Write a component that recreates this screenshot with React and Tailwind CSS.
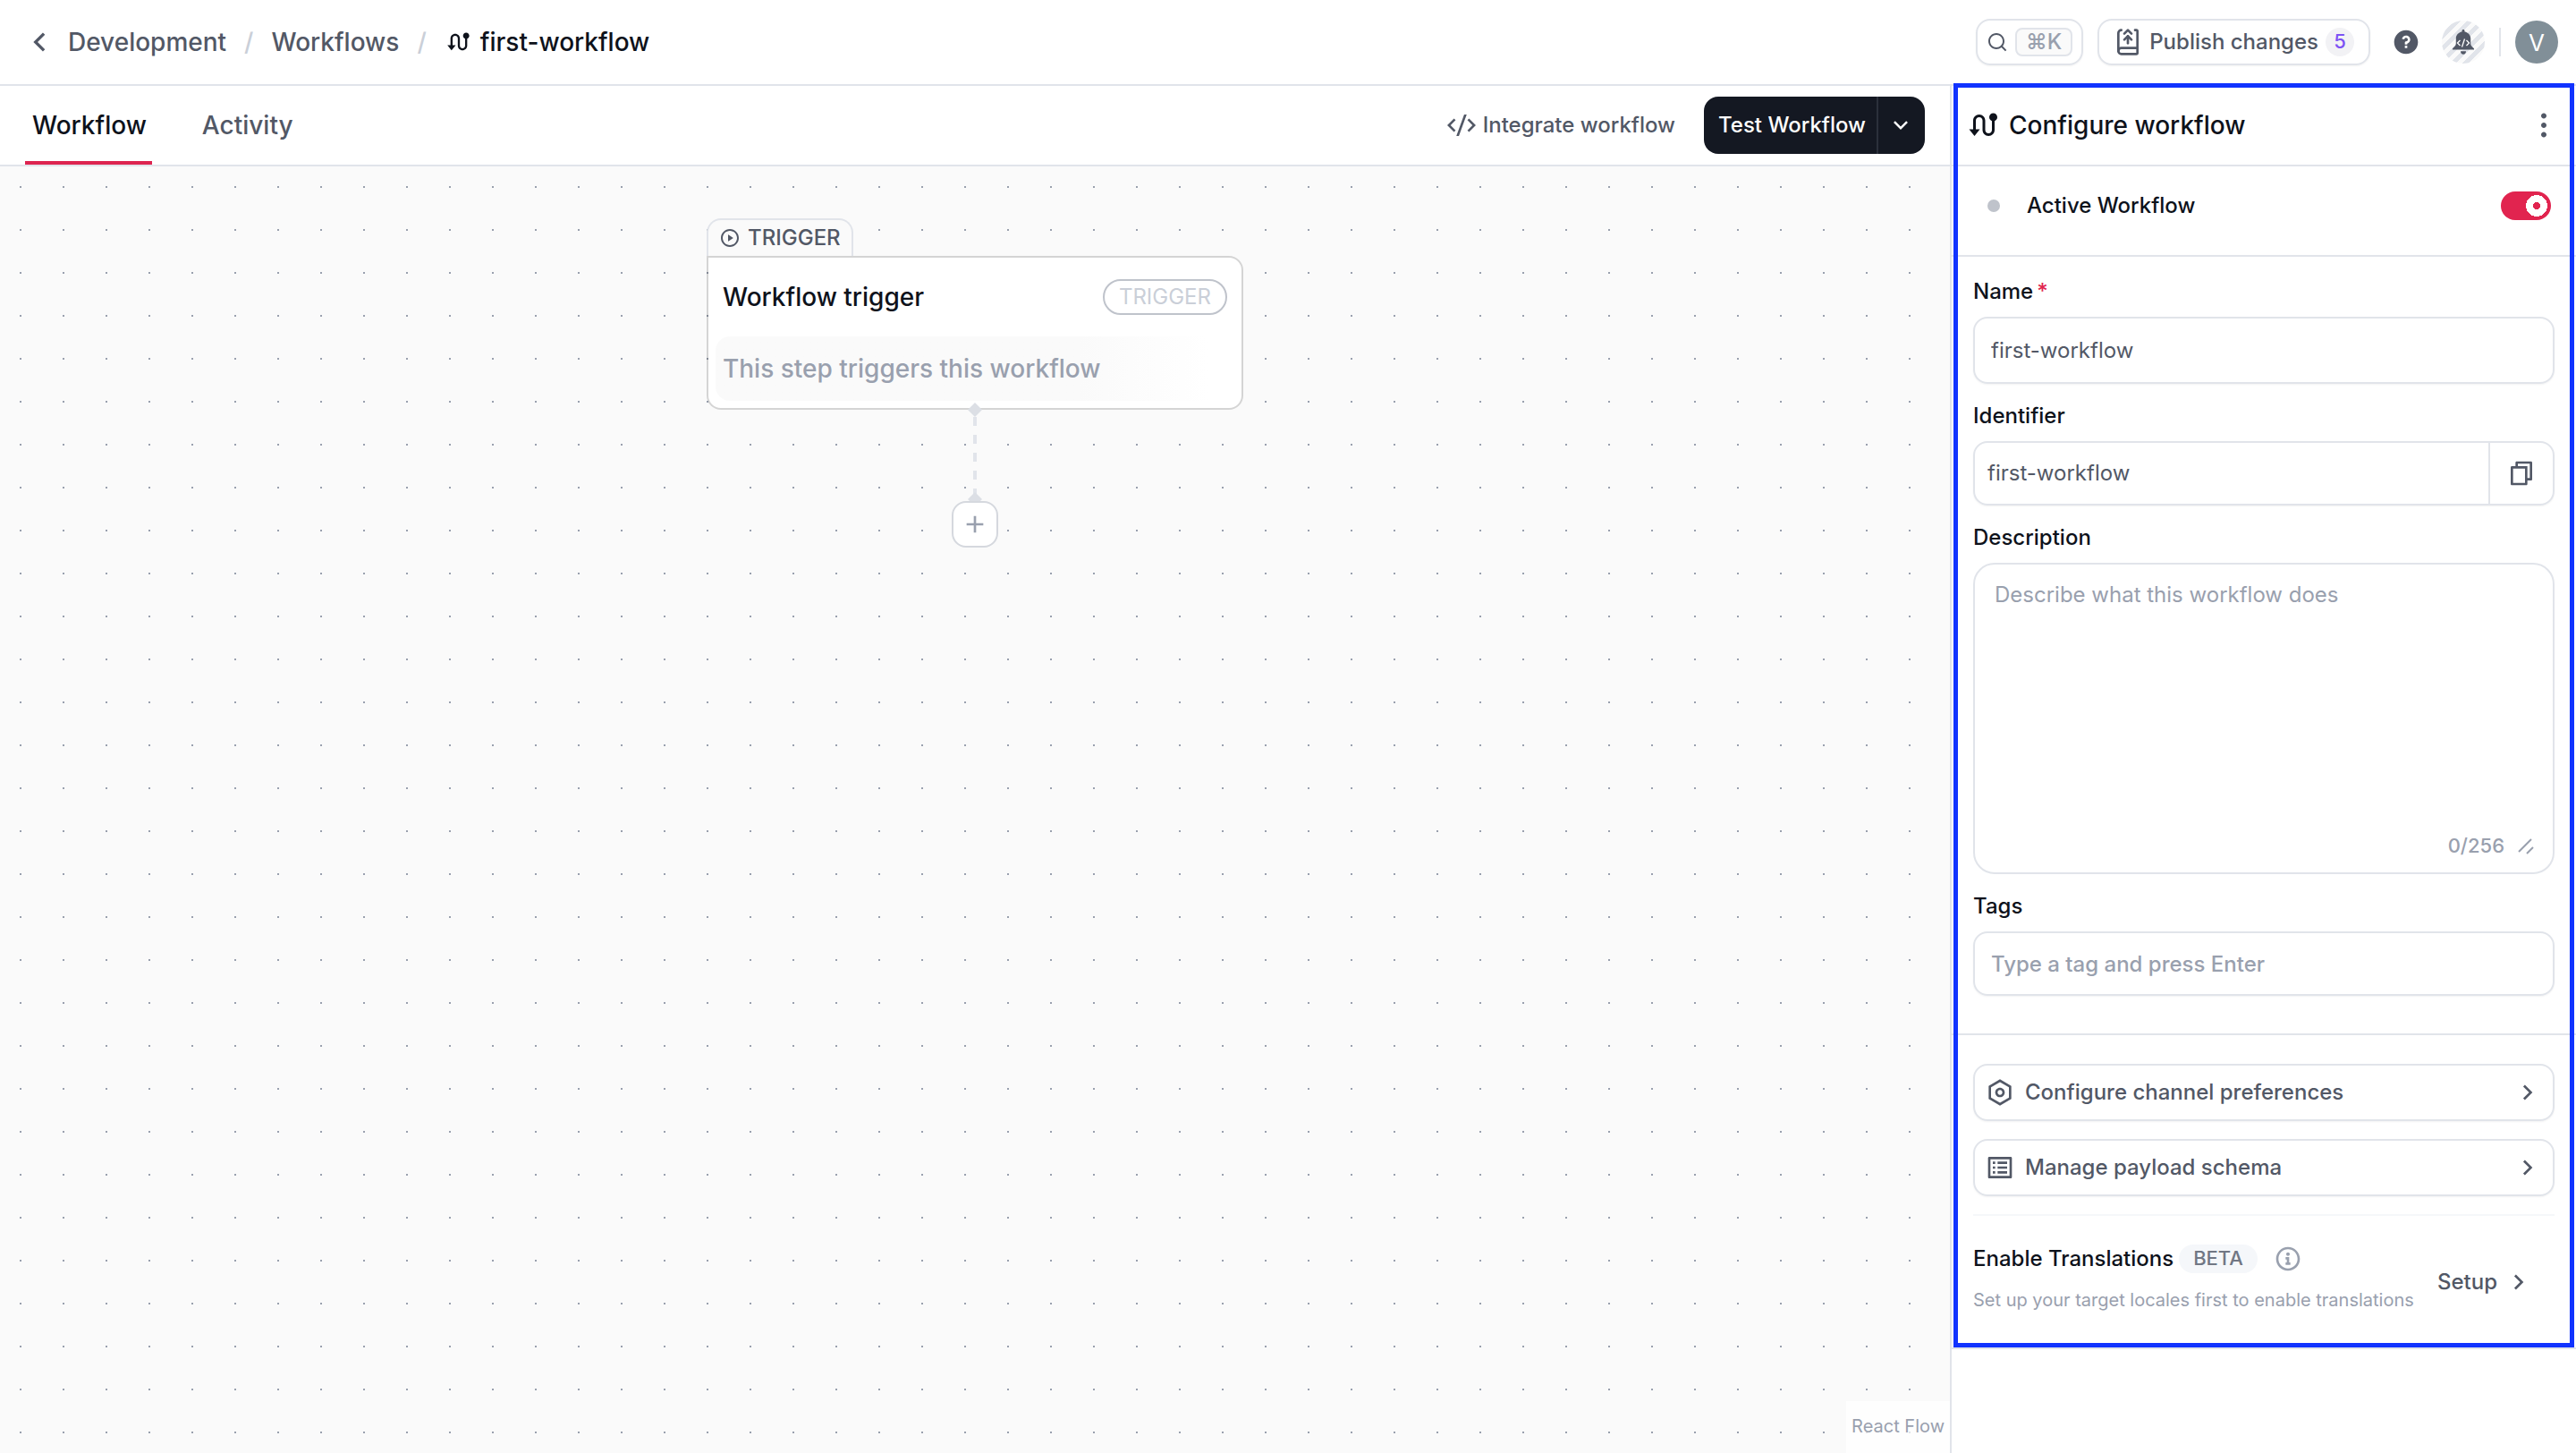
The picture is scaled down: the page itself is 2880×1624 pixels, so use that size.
import React, { useState } from "react";
import {
	RiAddLine,
	RiArrowDownSLine,
	RiArrowLeftSLine,
	RiArrowRightSLine,
	RiCodeSSlashLine,
	RiFileCopyLine,
	RiInformation2Line,
	RiListView,
	RiMore2Fill,
	RiPlayCircleLine,
	RiQuestionFill,
	RiRouteFill,
	RiSearchLine,
	RiSettingsLine,
} from "react-icons/ri";
import { LuBookUp2 } from "react-icons/lu";

const BellIcon = () => (
	<svg viewBox="0 0 24 28" className="h-7 w-6" fill="none">
		<path
			d="M12 0c.9 0 1.500.6 1.500 1.500v.9c3.900.7 6.700 3.700 6.700 7.600v5.500c0 2.200 1 3.300 3.800 5.700v1.300H0v-1.300c2.800-2.400 3.800-3.500 3.800-5.700V10c0-3.900 2.800-6.900 6.700-7.600v-.9C10.500.6 11.100 0 12 0z"
			fill="#525866"
		/>
		<path d="M9 24.300h6c0 2-1.200 3.500-3 3.500s-3-1.500-3-3.500z" fill="#525866" />
		<path
			d="M8.500 12 5.500 15l3 3M15.500 12l3 3-3 3M13.500 10.500l-3 9"
			stroke="#fff"
			strokeWidth="1.300"
		/>
	</svg>
);

const Header = () => (
	<header className="flex h-24 items-center justify-between border-b-2 border-[#e1e4ea] pr-5 pl-6">
		<nav className="flex items-center text-[28px] leading-10 font-medium text-[#525866]">
			<button aria-label="Back" className="mr-3">
				<RiArrowLeftSLine size={40} />
			</button>
			<a href="#development">Development</a>
			<span className="mx-5 text-[#cacfd8]">/</span>
			<a href="#workflows">Workflows</a>
			<span className="mr-[22px] ml-5 text-[#cacfd8]">/</span>
			<span className="flex items-center gap-2.5 text-[#0e121b]">
				<RiRouteFill size={28} />
				first-workflow
			</span>
		</nav>
		<div className="flex items-center">
			<button
				aria-label="Search"
				className="flex h-[52px] items-center gap-2 rounded-2xl border-2 border-[#e1e4ea] px-2.5 shadow-xs"
			>
				<RiSearchLine size={24} className="text-[#525866]" />
				<kbd className="flex h-8 w-16 items-center justify-center rounded-lg border-2 border-[#e1e4ea] bg-[#fafafa] font-[Inter,sans-serif] text-2xl font-medium text-[#99a0ae]">
					⌘K
				</kbd>
			</button>
			<button className="ml-4 flex h-[52px] items-center gap-2 rounded-2xl border-2 border-[#e1e4ea] px-4 text-2xl font-medium text-[#525866] shadow-xs">
				<LuBookUp2 size={32} />
				Publish changes
				<span className="flex size-8 items-center justify-center rounded-full bg-[#f2f2f5] text-[22px] text-[#7d52f4]">
					5
				</span>
			</button>
			<button aria-label="Help" className="ml-6 text-[#525866]">
				<RiQuestionFill size={32} />
			</button>
			<button
				aria-label="Notifications"
				className="ml-6 flex size-12 items-center justify-center rounded-full bg-[repeating-linear-gradient(135deg,#e1e4ea_0px,#e1e4ea_5px,#fafafa_5px,#fafafa_10px)]"
			>
				<BellIcon />
			</button>
			<div className="mx-4 h-8 w-0.5 bg-[#e1e4ea]" />
			<button className="flex size-12 items-center justify-center rounded-full bg-[#818f98] text-[26px] text-white">
				V
			</button>
		</div>
	</header>
);

const Tabs = () => (
	<div className="flex h-[90px] items-center justify-between border-b-2 border-[#e1e4ea] pr-7 pl-7">
		<div className="flex h-full gap-12 text-[28px] font-medium" role="tablist">
			<button
				role="tab"
				aria-selected="true"
				className="h-full border-b-4 border-[#dd2450] pr-1.5 pl-2 pt-1 text-[#0e121b]"
			>
				Workflow
			</button>
			<button
				role="tab"
				aria-selected="false"
				className="h-full border-b-4 border-transparent pr-1.5 pl-2 pt-1 text-[#525866]"
			>
				Activity
			</button>
		</div>
		<div className="flex items-center gap-8 text-2xl font-medium">
			<button className="flex items-center gap-2 text-[#525866]">
				<RiCodeSSlashLine size={32} />
				Integrate workflow
			</button>
			<div className="flex h-16 rounded-2xl bg-[#141822] text-white">
				<button className="border-r-2 border-[#2b303b] pr-3 pl-4">
					Test Workflow
				</button>
				<button aria-label="More test options" className="pr-3 pl-2.5">
					<RiArrowDownSLine size={30} />
				</button>
			</div>
		</div>
	</div>
);

const Canvas = () => (
	<div className="relative flex-1 bg-[#fafafa]">
		<svg className="absolute inset-0 size-full">
			<defs>
				<pattern id="dots" width="48" height="48" patternUnits="userSpaceOnUse">
					<rect x="22" y="22" width="2" height="2" fill="#99a0ae" />
				</pattern>
			</defs>
			<rect width="100%" height="100%" fill="url(#dots)" />
		</svg>

		<div className="absolute top-[58px] left-[790px] w-[600px]">
			<div className="flex h-[42px] w-fit items-center gap-2 rounded-t-2xl border-2 border-b-0 border-[#e1e4ea] bg-[#fafafa] px-3 text-2xl font-medium text-[#525866]">
				<RiPlayCircleLine size={24} />
				TRIGGER
			</div>
			<div className="h-[172px] rounded-2xl rounded-tl-none border-2 border-black/15 bg-white bg-clip-padding px-2">
				<div className="flex h-[88px] items-center justify-between px-2">
					<h3 className="text-[28px] font-medium text-[#0e121b]">
						Workflow trigger
					</h3>
					<span className="flex h-10 items-center rounded-full border-2 border-[#bfc3cb] px-4 text-2xl text-[#cacfd8]">
						TRIGGER
					</span>
				</div>
				<p className="flex h-[72px] items-center rounded-2xl bg-linear-to-r from-[#fafafa] from-70% to-white to-95% px-2 text-[28px] font-medium text-[#99a0ae]">
					This step triggers this workflow
				</p>
			</div>
		</div>

		<svg
			viewBox="0 0 20 114"
			className="absolute top-[262px] left-[1080px] h-[114px] w-5"
		>
			<path
				d="M10 18V104"
				stroke="#e1e4ea"
				strokeWidth="4"
				strokeDasharray="10 10"
			/>
			<path d="M10 2l8 8-8 8-8-8z" fill="#dcdfe5" />
			<path d="M10 102l8 8-8 8-8-8z" fill="#dcdfe5" />
		</svg>
		<button
			aria-label="Add step"
			className="absolute top-[374px] left-[1064px] flex size-[52px] items-center justify-center rounded-2xl border-2 border-[#d5d8de] bg-white text-[#99a0ae]"
		>
			<RiAddLine size={32} />
		</button>

		<a
			href="#react-flow"
			className="absolute right-0 bottom-0 flex h-[58px] items-center bg-white/70 px-1.5 pb-0.5 text-xl text-[#99a0ae]"
		>
			React Flow
		</a>
	</div>
);

const fieldClass =
	"w-full rounded-2xl border-2 border-[#e1e4ea] px-[18px] text-2xl text-[#525866] shadow-xs outline-none placeholder:font-medium placeholder:text-[#99a0ae]";
const labelClass = "block text-2xl leading-8 font-medium text-[#0e121b]";

const Sidebar = () => {
	const [name, setName] = useState("first-workflow");
	const [description, setDescription] = useState("");
	const [active, setActive] = useState(true);

	return (
		<aside className="relative w-[700px] shrink-0 border-l-2 border-[#e1e4ea]">
			<div className="flex h-[90px] items-center justify-between border-b-2 border-[#e1e4ea] px-[18px]">
				<h2 className="flex items-center gap-2.5 text-[28px] font-medium text-[#0e121b]">
					<RiRouteFill size={36} />
					Configure workflow
				</h2>
				<button aria-label="Workflow actions" className="text-[#525866]">
					<RiMore2Fill size={36} />
				</button>
			</div>

			<div className="flex h-[101px] items-center border-b-2 border-[#e1e4ea] pr-7 pb-3 pl-10">
				<span className="size-3.5 rounded-full bg-[#bfc3cb]" />
				<label
					htmlFor="active"
					className="ml-[30px] flex-1 text-2xl font-medium text-[#0e121b]"
				>
					Active Workflow
				</label>
				<input
					id="active"
					type="checkbox"
					checked={active}
					onChange={() => setActive(!active)}
					className="h-8 w-14 appearance-none rounded-full bg-[#cacfd8] bg-[radial-gradient(circle_at_16px_16px,#cacfd8_4px,#ffffff_4px,#ffffff_12px,transparent_12px)] checked:bg-[#e1244f] checked:bg-[radial-gradient(circle_at_40px_16px,#e1244f_4px,#ffffff_4px,#ffffff_12px,transparent_12px)]"
				/>
			</div>

			<form className="flex flex-col border-b-2 border-[#e1e4ea] px-6 pt-[23px] pb-[42px]">
				<label htmlFor="name" className={labelClass}>
					Name<span className="ml-1 text-[#e1244f]">*</span>
				</label>
				<input
					id="name"
					value={name}
					onChange={(e) => setName(e.target.value)}
					className={`${fieldClass} mt-3 h-[75px]`}
				/>
				<label htmlFor="identifier" className={`${labelClass} mt-5`}>
					Identifier
				</label>
				<div className="mt-3 flex h-[72px] rounded-2xl border-2 border-[#e1e4ea] shadow-xs">
					<input
						id="identifier"
						value="first-workflow"
						readOnly
						className="min-w-0 flex-1 px-3.5 text-2xl text-[#525866] outline-none"
					/>
					<button
						type="button"
						aria-label="Copy identifier"
						className="flex w-[72px] items-center justify-center border-l-2 border-[#e1e4ea] text-[#525866]"
					>
						<RiFileCopyLine size={32} />
					</button>
				</div>
				<label htmlFor="description" className={`${labelClass} mt-5`}>
					Description
				</label>
				<div className="mt-3 flex h-[348px] flex-col rounded-3xl border-2 border-[#e1e4ea] pb-3.5">
					<textarea
						id="description"
						maxLength={256}
						value={description}
						onChange={(e) => setDescription(e.target.value)}
						placeholder="Describe what this workflow does"
						className="flex-1 resize-none px-[22px] pt-4 text-2xl leading-9 text-[#525866] outline-none placeholder:text-[#99a0ae]"
					/>
					<div className="flex items-center justify-end gap-3 pr-[18px] text-[22px] leading-8 font-medium text-[#99a0ae]">
						{description.length}/256
						<svg
							viewBox="0 0 24 24"
							className="size-6"
							fill="none"
							stroke="currentColor"
							strokeWidth="2"
						>
							<path d="M4 19L18 5M13 21L20 14" />
						</svg>
					</div>
				</div>
				<label htmlFor="tags" className={`${labelClass} mt-5`}>
					Tags
				</label>
				<input
					id="tags"
					placeholder="Type a tag and press Enter"
					className={`${fieldClass} mt-3 h-[72px]`}
				/>
			</form>

			<div className="px-6 pt-8">
				<div className="flex flex-col gap-5 border-b-2 border-[#f5f7fa] pb-5 text-2xl font-medium text-[#525866]">
					<button className="flex h-16 items-center gap-3 rounded-2xl border-2 border-[#e1e4ea] px-3 shadow-xs">
						<RiSettingsLine size={32} />
						Configure channel preferences
						<RiArrowRightSLine size={32} className="ml-auto" />
					</button>
					<button className="flex h-16 items-center gap-3 rounded-2xl border-2 border-[#e1e4ea] px-3 shadow-xs">
						<RiListView size={32} />
						Manage payload schema
						<RiArrowRightSLine size={32} className="ml-auto" />
					</button>
				</div>
			</div>

			<div className="flex h-[149px] items-center justify-between border-b-2 border-[#e1e4ea] pr-12 pl-6">
				<div className="pb-2">
					<div className="flex items-center text-2xl font-medium text-[#0e121b]">
						Enable Translations
						<span className="ml-1.5 flex h-8 items-center rounded-full bg-[#f5f7fa] px-4 text-[22px] text-[#717784]">
							BETA
						</span>
						<RiInformation2Line size={32} className="ml-[18px] text-[#99a0ae]" />
					</div>
					<p className="mt-4 text-xl text-[#99a0ae]">
						Set up your target locales first to enable translations
					</p>
				</div>
				<button className="flex items-center gap-2 text-2xl font-medium text-[#525866]">
					Setup
					<RiArrowRightSLine size={32} />
				</button>
			</div>

			<div className="pointer-events-none absolute -top-[3px] right-0.5 bottom-[118px] left-0.5 border-[5px] border-[#1133ff]" />
		</aside>
	);
};

const App = () => (
	<div className="flex min-h-screen flex-col bg-white font-[Inter,sans-serif]">
		<Header />
		<div className="flex flex-1">
			<main className="flex min-w-0 flex-1 flex-col">
				<Tabs />
				<Canvas />
			</main>
			<Sidebar />
		</div>
	</div>
);

export default App;
